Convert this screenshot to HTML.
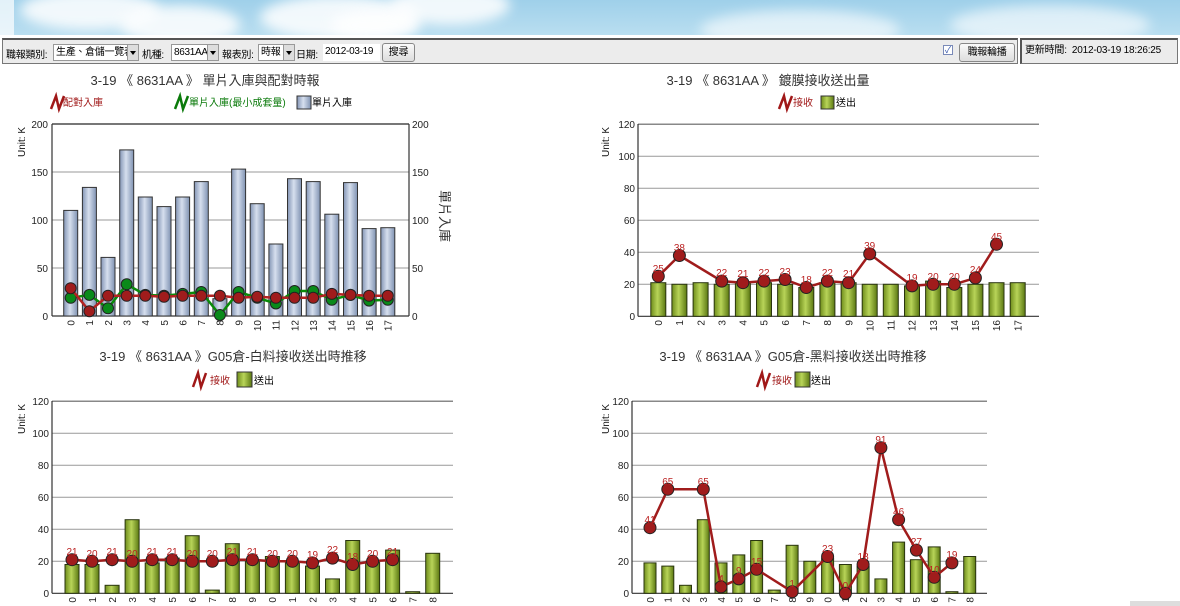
<!DOCTYPE html>
<html><head><meta charset="utf-8"><style>
*{margin:0;padding:0;box-sizing:border-box}
body{width:1180px;height:606px;overflow:hidden;background:#fff;font-family:"Liberation Sans","Noto Sans CJK TC",sans-serif;font-size:11px;color:#000;position:relative}
.sky{position:absolute;left:0;top:0;width:1180px;height:35px;background:linear-gradient(180deg,#9fd0ea,#b9def0);overflow:hidden}
.cl{position:absolute;background:#fff;border-radius:50%;filter:blur(6px);opacity:.85}
.bar{position:absolute;left:2px;top:38px;width:1016px;height:26px;background:#ececec;border:1px solid #777;border-top:2px solid #555;white-space:nowrap}
.upd{position:absolute;left:1020px;top:38px;width:158px;height:26px;background:#ececec;border:1px solid #777;border-left:2px solid #555;border-top:2px solid #555;font-size:10px;line-height:22px;padding-left:3px;white-space:nowrap;letter-spacing:-0.2px}
.t{position:absolute;top:6px;font-size:10px;white-space:nowrap;letter-spacing:-0.3px}
.sel{position:absolute;top:4px;height:17px;background:#fff;border:1px solid #999;font-size:10px;line-height:15px;padding-left:2px;white-space:nowrap;overflow:hidden;letter-spacing:-0.3px}
.sel i{position:absolute;right:0;top:0;width:11px;height:15px;background:#ddd;border-left:1px solid #999}
.sel i:after{content:"";position:absolute;left:2px;top:6px;border:3px solid transparent;border-top:4px solid #000}
.btn{position:absolute;top:3px;height:19px;border:1px solid #888;border-radius:3px;background:linear-gradient(#fafafa,#ddd);font-size:10px;text-align:center;line-height:17px;white-space:nowrap;letter-spacing:-0.3px}
svg{position:absolute;left:0;top:0}
svg text{font-family:"Liberation Sans","Noto Sans CJK TC",sans-serif}
</style></head><body>
<div class="sky">
<div class="cl" style="left:20px;top:-10px;width:140px;height:40px"></div>
<div class="cl" style="left:120px;top:5px;width:120px;height:40px"></div>
<div class="cl" style="left:260px;top:-5px;width:160px;height:45px"></div>
<div class="cl" style="left:330px;top:10px;width:90px;height:30px"></div>
<div class="cl" style="left:390px;top:-15px;width:120px;height:40px"></div>
<div class="cl" style="left:700px;top:10px;width:200px;height:40px;opacity:.6"></div>
<div class="cl" style="left:950px;top:5px;width:200px;height:40px;opacity:.6"></div>
</div>
<div style="position:absolute;left:0;top:0;width:14px;height:35px;background:#fff;opacity:.7"></div>
<div class="bar">
<span class="t" style="left:3px">職報類別:</span>
<div class="sel" style="left:50px;width:86px">生產、倉儲一覽表<i></i></div>
<span class="t" style="left:139px">机種:</span>
<div class="sel" style="left:168px;width:48px">8631AA<i></i></div>
<span class="t" style="left:219px">報表別:</span>
<div class="sel" style="left:255px;width:37px">時報<i></i></div>
<span class="t" style="left:293px">日期:</span>
<div class="sel" style="left:320px;width:57px;border:none">2012-03-19</div>
<div class="btn" style="left:379px;width:33px">搜尋</div>
<div style="position:absolute;left:940px;top:5px;width:10px;height:10px;border:1px solid #7a8ab8;background:#fff;font-size:9px;line-height:8px;color:#3355aa;text-align:center">✓</div>
<div class="btn" style="left:956px;width:56px">職報輪播</div>
</div>
<div class="upd">更新時間:&nbsp; 2012-03-19 18:26:25</div>

<svg width="1180" height="606" viewBox="0 0 1180 606">
<defs>
<linearGradient id="gb" x1="0" x2="1" y1="0" y2="0"><stop offset="0" stop-color="#8395b5"/><stop offset=".45" stop-color="#d6dfee"/><stop offset="1" stop-color="#7f92b2"/></linearGradient>
<linearGradient id="gg" x1="0" x2="1" y1="0" y2="0"><stop offset="0" stop-color="#6f8d1c"/><stop offset=".45" stop-color="#b8d458"/><stop offset="1" stop-color="#5b7812"/></linearGradient>
</defs>
<g font-size="13" fill="#333" text-anchor="middle">
<text x="205" y="85">3-19 《 8631AA 》 單片入庫與配對時報</text>
<text x="768" y="85">3-19 《 8631AA 》 鍍膜接收送出量</text>
<text x="233" y="361">3-19 《 8631AA 》G05倉-白料接收送出時推移</text>
<text x="793" y="361">3-19 《 8631AA 》G05倉-黑料接收送出時推移</text>
</g>
<!-- legends -->
<g font-size="10">
<path d="M51 109 L56 96 L59 109 L64 96" stroke="#a01818" stroke-width="2.5" fill="none"/><text x="63" y="106" fill="#a01818">配對入庫</text>
<path d="M175 109 L180 96 L183 109 L188 96" stroke="#0a7a0a" stroke-width="2.5" fill="none"/><text x="189" y="106" fill="#0a7a0a">單片入庫(最小成套量)</text>
<rect x="297" y="96" width="14" height="13" fill="url(#gb)" stroke="#333"/><text x="312" y="106">單片入庫</text>
<path d="M779 109 L784 96 L787 109 L792 96" stroke="#a01818" stroke-width="2.5" fill="none"/><text x="793" y="106" fill="#a01818">接收</text>
<rect x="821" y="96" width="13" height="13" fill="url(#gg)" stroke="#333"/><text x="836" y="106">送出</text>
<path d="M193 387 L198 373 L201 387 L206 373" stroke="#a01818" stroke-width="2.5" fill="none"/><text x="210" y="384" fill="#a01818">接收</text>
<rect x="237" y="372" width="15" height="15" fill="url(#gg)" stroke="#333"/><text x="254" y="384">送出</text>
<path d="M757 387 L762 373 L765 387 L770 373" stroke="#a01818" stroke-width="2.5" fill="none"/><text x="772" y="384" fill="#a01818">接收</text>
<rect x="795" y="372" width="15" height="15" fill="url(#gg)" stroke="#333"/><text x="811" y="384">送出</text>
</g>
<!-- axis titles -->
<g font-size="10" fill="#111">
<text transform="translate(25,157) rotate(-90)">Unit: K</text>
<text transform="translate(609,157) rotate(-90)">Unit: K</text>
<text transform="translate(25,434) rotate(-90)">Unit: K</text>
<text transform="translate(609,434) rotate(-90)">Unit: K</text>
</g>
<text transform="translate(440,190) rotate(90)" font-size="13" fill="#333">單片入庫</text>

<!-- CHART 1 -->
<g stroke="#999" stroke-width="1"><line x1="52" x2="409" y1="172" y2="172"/><line x1="52" x2="409" y1="220" y2="220"/><line x1="52" x2="409" y1="268" y2="268"/></g>
<line x1="52" x2="409" y1="124" y2="124" stroke="#777" stroke-width="2"/>
<g stroke="#333" stroke-width="1.2" fill="none"><line x1="52" y1="124" x2="52" y2="316"/><line x1="409" y1="124" x2="409" y2="316"/><line x1="52" y1="316" x2="409" y2="316"/></g>
<g font-size="10" fill="#222" text-anchor="end"><text x="48" y="128">200</text><text x="48" y="176">150</text><text x="48" y="224">100</text><text x="48" y="272">50</text><text x="48" y="320">0</text></g>
<g font-size="10" fill="#222"><text x="412" y="128">200</text><text x="412" y="176">150</text><text x="412" y="224">100</text><text x="412" y="272">50</text><text x="412" y="320">0</text></g>
<g fill="url(#gb)" stroke="#333">
<rect x="63.7" y="210.4" width="14" height="105.6"/><rect x="82.4" y="187.4" width="14" height="128.6"/><rect x="101" y="257.4" width="14" height="58.6"/><rect x="119.7" y="149.9" width="14" height="166.1"/><rect x="138.3" y="197" width="14" height="119"/><rect x="157" y="206.6" width="14" height="109.4"/><rect x="175.6" y="197" width="14" height="119"/><rect x="194.3" y="181.6" width="14" height="134.4"/><rect x="212.9" y="298.7" width="14" height="17.3"/><rect x="231.6" y="169.1" width="14" height="146.9"/><rect x="250.2" y="203.7" width="14" height="112.3"/><rect x="268.9" y="244" width="14" height="72"/><rect x="287.5" y="178.7" width="14" height="137.3"/><rect x="306.2" y="181.6" width="14" height="134.4"/><rect x="324.8" y="214.2" width="14" height="101.8"/><rect x="343.5" y="182.6" width="14" height="133.4"/><rect x="362.1" y="228.6" width="14" height="87.4"/><rect x="380.8" y="227.7" width="14" height="88.3"/>
</g>
<polyline fill="none" stroke="#0a8a0a" stroke-width="2.5" points="70.7,297.8 89.4,294.9 108,308.3 126.7,284.3 145.3,294.9 164,295.8 182.6,293.9 201.3,292 219.9,315 238.6,292 257.2,297.8 275.9,303.5 294.5,291 313.2,291 331.8,299.7 350.5,294.9 369.1,300.6 387.8,299.7"/>
<g fill="#0a8a1a" stroke="#222" stroke-width="1"><circle cx="70.7" cy="297.8" r="5.5"/><circle cx="89.4" cy="294.9" r="5.5"/><circle cx="108" cy="308.3" r="5.5"/><circle cx="126.7" cy="284.3" r="5.5"/><circle cx="145.3" cy="294.9" r="5.5"/><circle cx="164" cy="295.8" r="5.5"/><circle cx="182.6" cy="293.9" r="5.5"/><circle cx="201.3" cy="292" r="5.5"/><circle cx="219.9" cy="315" r="5.5"/><circle cx="238.6" cy="292" r="5.5"/><circle cx="257.2" cy="297.8" r="5.5"/><circle cx="275.9" cy="303.5" r="5.5"/><circle cx="294.5" cy="291" r="5.5"/><circle cx="313.2" cy="291" r="5.5"/><circle cx="331.8" cy="299.7" r="5.5"/><circle cx="350.5" cy="294.9" r="5.5"/><circle cx="369.1" cy="300.6" r="5.5"/><circle cx="387.8" cy="299.7" r="5.5"/></g>
<polyline fill="none" stroke="#b22222" stroke-width="2.5" points="70.7,288.2 89.4,311.2 108,295.8 126.7,295.8 145.3,295.8 164,296.8 182.6,295.8 201.3,295.8 219.9,295.8 238.6,297.8 257.2,296.8 275.9,297.8 294.5,297.8 313.2,297.8 331.8,293.9 350.5,294.9 369.1,295.8 387.8,295.8"/>
<g fill="#a01c1c" stroke="#222" stroke-width="1"><circle cx="70.7" cy="288.2" r="5.5"/><circle cx="89.4" cy="311.2" r="5.5"/><circle cx="108" cy="295.8" r="5.5"/><circle cx="126.7" cy="295.8" r="5.5"/><circle cx="145.3" cy="295.8" r="5.5"/><circle cx="164" cy="296.8" r="5.5"/><circle cx="182.6" cy="295.8" r="5.5"/><circle cx="201.3" cy="295.8" r="5.5"/><circle cx="219.9" cy="295.8" r="5.5"/><circle cx="238.6" cy="297.8" r="5.5"/><circle cx="257.2" cy="296.8" r="5.5"/><circle cx="275.9" cy="297.8" r="5.5"/><circle cx="294.5" cy="297.8" r="5.5"/><circle cx="313.2" cy="297.8" r="5.5"/><circle cx="331.8" cy="293.9" r="5.5"/><circle cx="350.5" cy="294.9" r="5.5"/><circle cx="369.1" cy="295.8" r="5.5"/><circle cx="387.8" cy="295.8" r="5.5"/></g>
<g font-size="10" fill="#222" text-anchor="end">
<text transform="translate(74.5,320) rotate(-90)">0</text><text transform="translate(93.2,320) rotate(-90)">1</text><text transform="translate(111.8,320) rotate(-90)">2</text><text transform="translate(130.5,320) rotate(-90)">3</text><text transform="translate(149.1,320) rotate(-90)">4</text><text transform="translate(167.8,320) rotate(-90)">5</text><text transform="translate(186.4,320) rotate(-90)">6</text><text transform="translate(205.1,320) rotate(-90)">7</text><text transform="translate(223.7,320) rotate(-90)">8</text><text transform="translate(242.4,320) rotate(-90)">9</text><text transform="translate(261,320) rotate(-90)">10</text><text transform="translate(279.7,320) rotate(-90)">11</text><text transform="translate(298.3,320) rotate(-90)">12</text><text transform="translate(317,320) rotate(-90)">13</text><text transform="translate(335.6,320) rotate(-90)">14</text><text transform="translate(354.3,320) rotate(-90)">15</text><text transform="translate(372.9,320) rotate(-90)">16</text><text transform="translate(391.6,320) rotate(-90)">17</text>
</g>

<!-- CHART 2 -->
<g stroke="#999"><line x1="638" x2="1039" y1="156.3" y2="156.3"/><line x1="638" x2="1039" y1="188.3" y2="188.3"/><line x1="638" x2="1039" y1="220.3" y2="220.3"/><line x1="638" x2="1039" y1="252.3" y2="252.3"/><line x1="638" x2="1039" y1="284.3" y2="284.3"/></g>
<line x1="638" x2="1039" y1="124.3" y2="124.3" stroke="#888" stroke-width="1.5"/>
<g stroke="#333" stroke-width="1.2"><line x1="638" y1="124" x2="638" y2="316.3"/><line x1="638" y1="316.3" x2="1039" y2="316.3"/></g>
<g font-size="10" fill="#222" text-anchor="end"><text x="635" y="128">120</text><text x="635" y="160">100</text><text x="635" y="192">80</text><text x="635" y="224">60</text><text x="635" y="256">40</text><text x="635" y="288">20</text><text x="635" y="320">0</text></g>
<g fill="url(#gg)" stroke="#2a3510">
<rect x="650.8" y="282.7" width="15" height="33.6"/><rect x="671.9" y="284.3" width="15" height="32"/><rect x="693.1" y="282.7" width="15" height="33.6"/><rect x="714.2" y="284.3" width="15" height="32"/><rect x="735.4" y="282.7" width="15" height="33.6"/><rect x="756.5" y="282.7" width="15" height="33.6"/><rect x="777.6" y="284.3" width="15" height="32"/><rect x="798.8" y="287.5" width="15" height="28.8"/><rect x="819.9" y="282.7" width="15" height="33.6"/><rect x="841.1" y="282.7" width="15" height="33.6"/><rect x="862.2" y="284.3" width="15" height="32"/><rect x="883.3" y="284.3" width="15" height="32"/><rect x="904.5" y="285.9" width="15" height="30.4"/><rect x="925.6" y="281.1" width="15" height="35.2"/><rect x="946.8" y="287.5" width="15" height="28.8"/><rect x="967.9" y="284.3" width="15" height="32"/><rect x="989" y="282.7" width="15" height="33.6"/><rect x="1010.2" y="282.7" width="15" height="33.6"/>
</g>
<polyline fill="none" stroke="#a01c1c" stroke-width="2.5" points="658.3,276.3 679.4,255.5 721.7,281.1 742.9,282.7 764,281.1 785.1,279.5 806.3,287.5 827.4,281.1 848.6,282.7 869.7,253.9 912,285.9 933.1,284.3 954.3,284.3 975.4,277.9 996.5,244.3"/>
<g fill="#a01c1c" stroke="#222"><circle cx="658.3" cy="276.3" r="6"/><circle cx="679.4" cy="255.5" r="6"/><circle cx="721.7" cy="281.1" r="6"/><circle cx="742.9" cy="282.7" r="6"/><circle cx="764" cy="281.1" r="6"/><circle cx="785.1" cy="279.5" r="6"/><circle cx="806.3" cy="287.5" r="6"/><circle cx="827.4" cy="281.1" r="6"/><circle cx="848.6" cy="282.7" r="6"/><circle cx="869.7" cy="253.9" r="6"/><circle cx="912" cy="285.9" r="6"/><circle cx="933.1" cy="284.3" r="6"/><circle cx="954.3" cy="284.3" r="6"/><circle cx="975.4" cy="277.9" r="6"/><circle cx="996.5" cy="244.3" r="6"/></g>
<g font-size="10" fill="#b22" text-anchor="middle"><text x="658.3" y="272">25</text><text x="679.4" y="251">38</text><text x="721.7" y="276">22</text><text x="742.9" y="277">21</text><text x="764" y="276">22</text><text x="785.1" y="275">23</text><text x="806.3" y="283">18</text><text x="827.4" y="276">22</text><text x="848.6" y="277">21</text><text x="869.7" y="249">39</text><text x="912" y="281">19</text><text x="933.1" y="280">20</text><text x="954.3" y="280">20</text><text x="975.4" y="273">24</text><text x="996.5" y="240">45</text></g>
<g font-size="10" fill="#222" text-anchor="end">
<text transform="translate(662,320) rotate(-90)">0</text><text transform="translate(683.1,320) rotate(-90)">1</text><text transform="translate(704.3,320) rotate(-90)">2</text><text transform="translate(725.4,320) rotate(-90)">3</text><text transform="translate(746.6,320) rotate(-90)">4</text><text transform="translate(767.7,320) rotate(-90)">5</text><text transform="translate(788.8,320) rotate(-90)">6</text><text transform="translate(810,320) rotate(-90)">7</text><text transform="translate(831.1,320) rotate(-90)">8</text><text transform="translate(852.3,320) rotate(-90)">9</text><text transform="translate(873.4,320) rotate(-90)">10</text><text transform="translate(894.5,320) rotate(-90)">11</text><text transform="translate(915.7,320) rotate(-90)">12</text><text transform="translate(936.8,320) rotate(-90)">13</text><text transform="translate(958,320) rotate(-90)">14</text><text transform="translate(979.1,320) rotate(-90)">15</text><text transform="translate(1000.2,320) rotate(-90)">16</text><text transform="translate(1021.4,320) rotate(-90)">17</text>
</g>

<!-- CHART 3 -->
<g stroke="#999"><line x1="52" x2="453" y1="433.3" y2="433.3"/><line x1="52" x2="453" y1="465.3" y2="465.3"/><line x1="52" x2="453" y1="497.3" y2="497.3"/><line x1="52" x2="453" y1="529.3" y2="529.3"/><line x1="52" x2="453" y1="561.3" y2="561.3"/></g>
<line x1="52" x2="453" y1="401.3" y2="401.3" stroke="#888" stroke-width="1.5"/>
<g stroke="#333" stroke-width="1.2"><line x1="52" y1="401" x2="52" y2="593.3"/><line x1="52" y1="593.3" x2="453" y2="593.3"/></g>
<g font-size="10" fill="#222" text-anchor="end"><text x="49" y="405">120</text><text x="49" y="437">100</text><text x="49" y="469">80</text><text x="49" y="501">60</text><text x="49" y="533">40</text><text x="49" y="565">20</text><text x="49" y="597">0</text></g>
<g fill="url(#gg)" stroke="#2a3510">
<rect x="65" y="564.5" width="14" height="28.8"/><rect x="85" y="564.5" width="14" height="28.8"/><rect x="105.1" y="585.3" width="14" height="8"/><rect x="125.1" y="519.7" width="14" height="73.6"/><rect x="145.2" y="562.9" width="14" height="30.4"/><rect x="165.2" y="558.1" width="14" height="35.2"/><rect x="185.2" y="535.7" width="14" height="57.6"/><rect x="205.3" y="590.1" width="14" height="3.2"/><rect x="225.3" y="543.7" width="14" height="49.6"/><rect x="245.4" y="559.7" width="14" height="33.6"/><rect x="265.4" y="556.5" width="14" height="36.8"/><rect x="285.4" y="562.9" width="14" height="30.4"/><rect x="305.5" y="566.1" width="14" height="27.2"/><rect x="325.5" y="578.9" width="14" height="14.4"/><rect x="345.7" y="540.5" width="14" height="52.8"/><rect x="365.6" y="561.3" width="14" height="32"/><rect x="385.6" y="550.1" width="14" height="43.2"/><rect x="405.7" y="591.7" width="14" height="1.6"/><rect x="425.7" y="553.3" width="14" height="40"/>
</g>
<polyline fill="none" stroke="#a01c1c" stroke-width="2.5" points="72,559.7 92,561.3 112.1,559.7 132.1,561.3 152.2,559.7 172.2,559.7 192.2,561.3 212.3,561.3 232.3,559.7 252.4,559.7 272.4,561.3 292.4,561.3 312.5,562.9 332.5,558.1 352.7,564.5 372.6,561.3 392.6,559.7"/>
<g fill="#a01c1c" stroke="#222"><circle cx="72" cy="559.7" r="6"/><circle cx="92" cy="561.3" r="6"/><circle cx="112.1" cy="559.7" r="6"/><circle cx="132.1" cy="561.3" r="6"/><circle cx="152.2" cy="559.7" r="6"/><circle cx="172.2" cy="559.7" r="6"/><circle cx="192.2" cy="561.3" r="6"/><circle cx="212.3" cy="561.3" r="6"/><circle cx="232.3" cy="559.7" r="6"/><circle cx="252.4" cy="559.7" r="6"/><circle cx="272.4" cy="561.3" r="6"/><circle cx="292.4" cy="561.3" r="6"/><circle cx="312.5" cy="562.9" r="6"/><circle cx="332.5" cy="558.1" r="6"/><circle cx="352.7" cy="564.5" r="6"/><circle cx="372.6" cy="561.3" r="6"/><circle cx="392.6" cy="559.7" r="6"/></g>
<g font-size="10" fill="#b22" text-anchor="middle"><text x="72" y="555">21</text><text x="92" y="557">20</text><text x="112.1" y="555">21</text><text x="132.1" y="557">20</text><text x="152.2" y="555">21</text><text x="172.2" y="555">21</text><text x="192.2" y="557">20</text><text x="212.3" y="557">20</text><text x="232.3" y="555">21</text><text x="252.4" y="555">21</text><text x="272.4" y="557">20</text><text x="292.4" y="557">20</text><text x="312.5" y="558">19</text><text x="332.5" y="553">22</text><text x="352.7" y="560">18</text><text x="372.6" y="557">20</text><text x="392.6" y="555">21</text></g>
<g font-size="10" fill="#222" text-anchor="end">
<text transform="translate(75.8,597) rotate(-90)">0</text><text transform="translate(95.8,597) rotate(-90)">1</text><text transform="translate(115.9,597) rotate(-90)">2</text><text transform="translate(135.9,597) rotate(-90)">3</text><text transform="translate(156,597) rotate(-90)">4</text><text transform="translate(176,597) rotate(-90)">5</text><text transform="translate(196,597) rotate(-90)">6</text><text transform="translate(216.1,597) rotate(-90)">7</text><text transform="translate(236.1,597) rotate(-90)">8</text><text transform="translate(256.2,597) rotate(-90)">9</text><text transform="translate(276.2,597) rotate(-90)">0</text><text transform="translate(296.2,597) rotate(-90)">1</text><text transform="translate(316.3,597) rotate(-90)">2</text><text transform="translate(336.3,597) rotate(-90)">3</text><text transform="translate(356.5,597) rotate(-90)">4</text><text transform="translate(376.4,597) rotate(-90)">5</text><text transform="translate(396.4,597) rotate(-90)">6</text><text transform="translate(416.5,597) rotate(-90)">7</text><text transform="translate(436.5,597) rotate(-90)">8</text>
</g>

<!-- CHART 4 -->
<g stroke="#999"><line x1="632" x2="987" y1="433.3" y2="433.3"/><line x1="632" x2="987" y1="465.3" y2="465.3"/><line x1="632" x2="987" y1="497.3" y2="497.3"/><line x1="632" x2="987" y1="529.3" y2="529.3"/><line x1="632" x2="987" y1="561.3" y2="561.3"/></g>
<line x1="632" x2="987" y1="401.3" y2="401.3" stroke="#888" stroke-width="1.5"/>
<g stroke="#333" stroke-width="1.2"><line x1="632" y1="401" x2="632" y2="593.3"/><line x1="632" y1="593.3" x2="987" y2="593.3"/></g>
<g font-size="10" fill="#222" text-anchor="end"><text x="629" y="405">120</text><text x="629" y="437">100</text><text x="629" y="469">80</text><text x="629" y="501">60</text><text x="629" y="533">40</text><text x="629" y="565">20</text><text x="629" y="597">0</text></g>
<g fill="url(#gg)" stroke="#2a3510">
<rect x="644" y="562.9" width="12" height="30.4"/><rect x="661.8" y="566.1" width="12" height="27.2"/><rect x="679.5" y="585.3" width="12" height="8"/><rect x="697.3" y="519.7" width="12" height="73.6"/><rect x="715" y="562.9" width="12" height="30.4"/><rect x="732.8" y="554.9" width="12" height="38.4"/><rect x="750.6" y="540.5" width="12" height="52.8"/><rect x="768.3" y="590.1" width="12" height="3.2"/><rect x="786.1" y="545.3" width="12" height="48"/><rect x="803.8" y="561.3" width="12" height="32"/><rect x="821.6" y="558.1" width="12" height="35.2"/><rect x="839.4" y="564.5" width="12" height="28.8"/><rect x="857.1" y="566.1" width="12" height="27.2"/><rect x="874.9" y="578.9" width="12" height="14.4"/><rect x="892.6" y="542.1" width="12" height="51.2"/><rect x="910.4" y="559.7" width="12" height="33.6"/><rect x="928.2" y="546.9" width="12" height="46.4"/><rect x="945.9" y="591.7" width="12" height="1.6"/><rect x="963.7" y="556.5" width="12" height="36.8"/>
</g>
<polyline fill="none" stroke="#a01c1c" stroke-width="2.5" points="650,527.7 667.8,489.3 703.3,489.3 721,586.9 738.8,578.9 756.6,569.3 792.1,591.7 827.6,556.5 845.4,593.3 863.1,564.5 880.9,447.7 898.6,519.7 916.4,550.1 934.2,577.3 951.9,562.9"/>
<g fill="#a01c1c" stroke="#222"><circle cx="650" cy="527.7" r="6"/><circle cx="667.8" cy="489.3" r="6"/><circle cx="703.3" cy="489.3" r="6"/><circle cx="721" cy="586.9" r="6"/><circle cx="738.8" cy="578.9" r="6"/><circle cx="756.6" cy="569.3" r="6"/><circle cx="792.1" cy="591.7" r="6"/><circle cx="827.6" cy="556.5" r="6"/><circle cx="845.4" cy="593.3" r="6"/><circle cx="863.1" cy="564.5" r="6"/><circle cx="880.9" cy="447.7" r="6"/><circle cx="898.6" cy="519.7" r="6"/><circle cx="916.4" cy="550.1" r="6"/><circle cx="934.2" cy="577.3" r="6"/><circle cx="951.9" cy="562.9" r="6"/></g>
<g font-size="10" fill="#b22" text-anchor="middle"><text x="650" y="523">41</text><text x="667.8" y="485">65</text><text x="703.3" y="485">65</text><text x="721" y="582">4</text><text x="738.8" y="574">9</text><text x="756.6" y="565">15</text><text x="792.1" y="587">1</text><text x="827.6" y="552">23</text><text x="845.4" y="589">0</text><text x="863.1" y="560">18</text><text x="880.9" y="443">91</text><text x="898.6" y="515">46</text><text x="916.4" y="545">27</text><text x="934.2" y="573">10</text><text x="951.9" y="558">19</text></g>
<g font-size="10" fill="#222" text-anchor="end">
<text transform="translate(653.8,597) rotate(-90)">0</text><text transform="translate(671.6,597) rotate(-90)">1</text><text transform="translate(689.3,597) rotate(-90)">2</text><text transform="translate(707.1,597) rotate(-90)">3</text><text transform="translate(724.8,597) rotate(-90)">4</text><text transform="translate(742.6,597) rotate(-90)">5</text><text transform="translate(760.4,597) rotate(-90)">6</text><text transform="translate(778.1,597) rotate(-90)">7</text><text transform="translate(795.9,597) rotate(-90)">8</text><text transform="translate(813.6,597) rotate(-90)">9</text><text transform="translate(831.4,597) rotate(-90)">0</text><text transform="translate(849.2,597) rotate(-90)">1</text><text transform="translate(866.9,597) rotate(-90)">2</text><text transform="translate(884.7,597) rotate(-90)">3</text><text transform="translate(902.4,597) rotate(-90)">4</text><text transform="translate(920.2,597) rotate(-90)">5</text><text transform="translate(938,597) rotate(-90)">6</text><text transform="translate(955.7,597) rotate(-90)">7</text><text transform="translate(973.5,597) rotate(-90)">8</text>
</g>
<rect x="1130" y="601" width="50" height="5" fill="#ddd"/>
</svg>
</body></html>
